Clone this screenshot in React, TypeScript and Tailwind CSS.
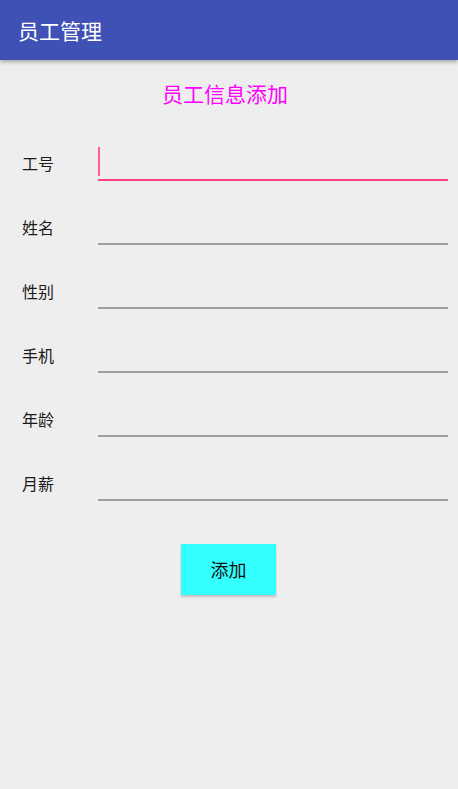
import React from "react";

const rows = ["工号", "姓名", "性别", "手机", "年龄", "月薪"];

export default function App() {
  return (
    <div
      className="w-[458px] h-[789px] bg-[#eeeeee] overflow-hidden"
      style={{ fontFamily: '"Noto Sans CJK SC", "Noto Sans", sans-serif' }}
    >
      <div className="h-[60px] bg-[#3f51b5] flex items-center pl-[18px] shadow-[0_2px_4px_rgba(0,0,0,0.3)] relative z-10">
        <span className="text-white text-[21px] leading-none">员工管理</span>
      </div>
      <div className="mt-[19px] h-[28px] mb-[10px] pl-[162px] text-[21px] leading-[28px] text-[#ff00ff]">
        员工信息添加
      </div>
      <div className="flex flex-col">
        {rows.map((r, i) => (
          <div key={r} className="h-[64px] flex">
            <div className="w-[98px] pl-[22px] self-end h-[36px] flex items-center text-[16px] text-[#1a1a1a]">
              {r}
            </div>
            <div
              className={
                "flex-1 mr-[10px] self-end h-[36px] relative " +
                (i === 0 ? "border-b-2 border-[#ff4081]" : "border-b-2 border-[#a0a0a0]")
              }
            >
              {i === 0 && (
                <div className="absolute left-[0px] top-[2px] w-[2px] h-[29px] bg-[#ff5c93]" />
              )}
            </div>
          </div>
        ))}
      </div>
      <div className="mt-[43px] pl-[181px]">
        <div className="w-[95px] h-[51px] bg-[#33ffff] flex items-center justify-center text-[18px] text-[#111] shadow-[0_2px_2px_rgba(0,0,0,0.2)]">
          添加
        </div>
      </div>
    </div>
  );
}
